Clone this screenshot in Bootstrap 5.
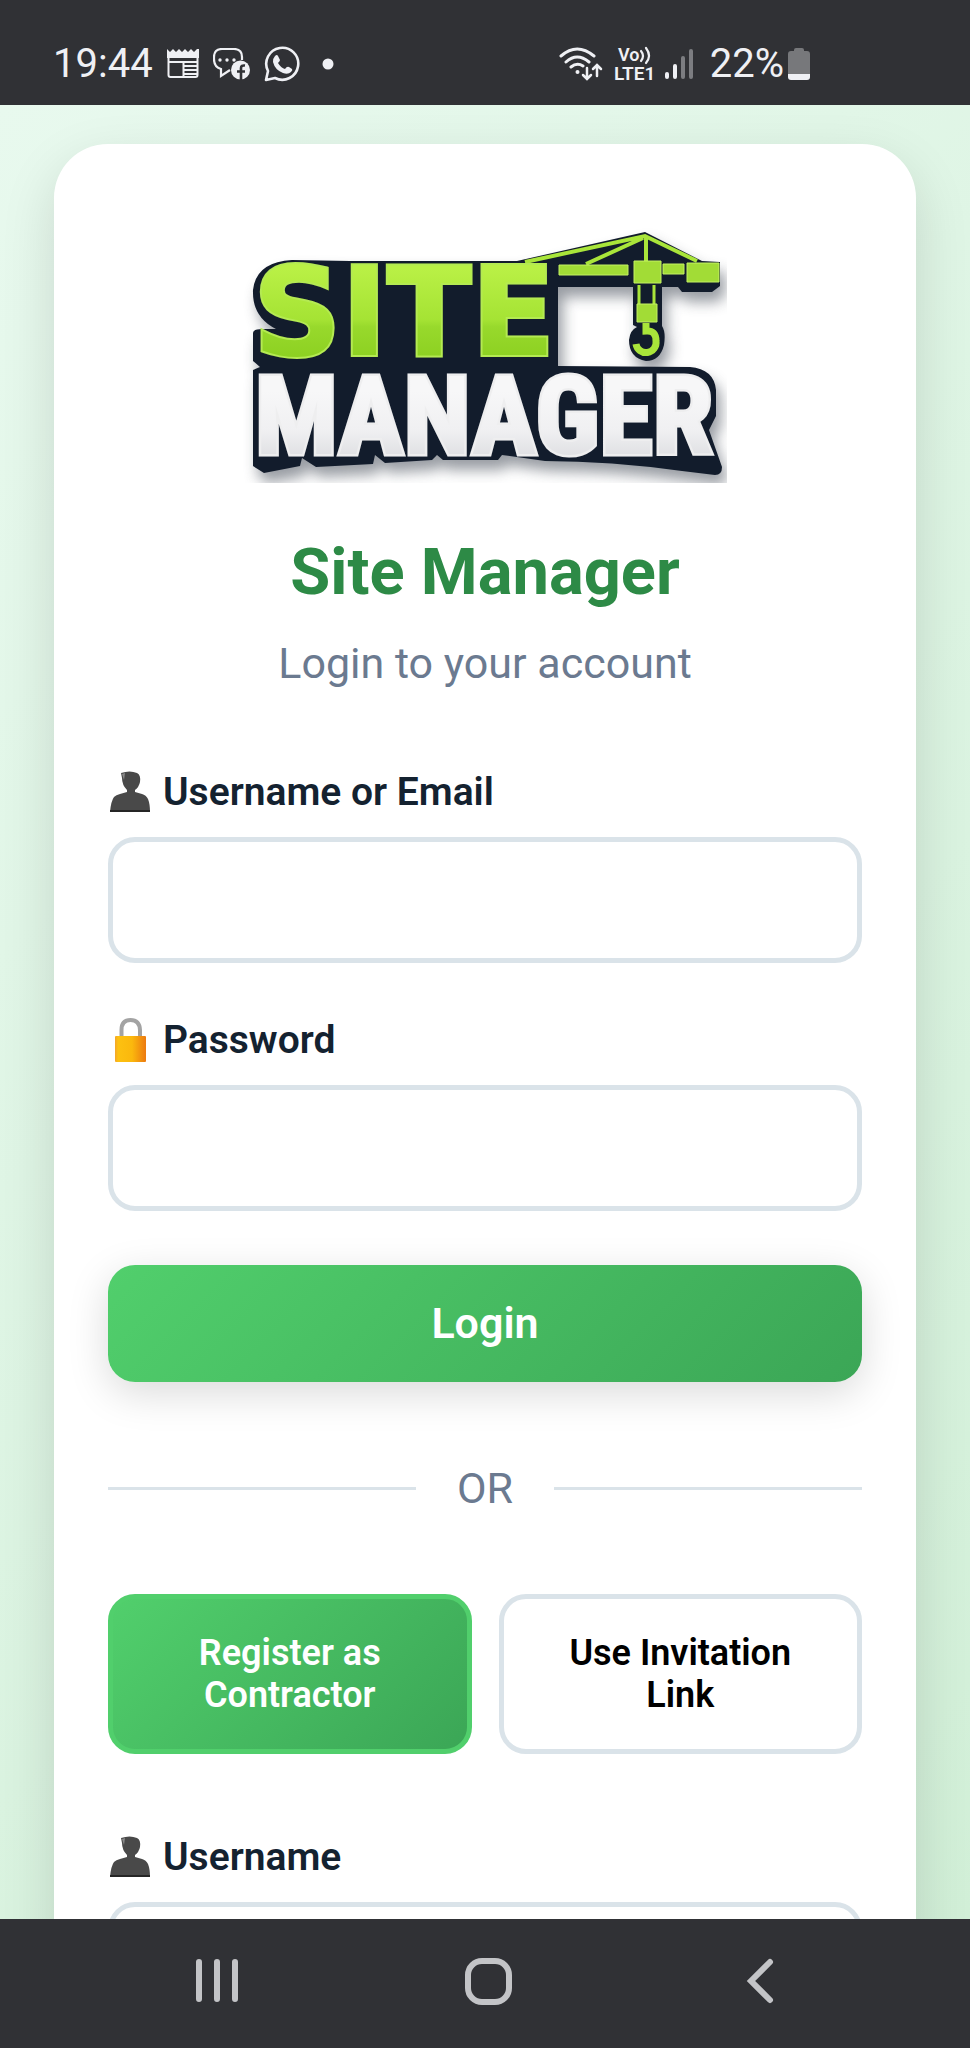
<!DOCTYPE html>
<html lang="en">
<head>
<meta charset="utf-8">
<meta name="viewport" content="width=device-width, initial-scale=1">
<title>Site Manager – Login</title>
<link href="https://cdn.jsdelivr.net/npm/bootstrap@5.3.0/dist/css/bootstrap.min.css" rel="stylesheet">
<style>
  body { font-family: Roboto, sans-serif; background: #e3f6e8; }
  .system-bar { background: #303135; color: #eff0f4; }
  .status-bar { height: 105px; padding: 22px 160px 0 53px; font-size: 40px; line-height: 48px; }
  .status-bar svg, .system-nav svg { display: block; flex: none; }
  .notices { gap: 14px; }
  .system-nav { height: 129px; padding: 0 75px 6px 81px; }
  .system-nav button { background: none; border: 0; color: #c3c4c7; height: 108px; }
  .page-area { min-height: 0; padding: 39px 54px 0; background: linear-gradient(135deg, #e8f9ee, #d1efd7); }
  .login-card { border: 0; border-radius: 54px; padding: 82px 54px 54px; box-shadow: 0 20px 54px rgba(0,0,0,.13); }
  .logo { display: block; width: 484px; max-width: 100%; margin: 0 auto 50px; }
  .login-card h1 { font-size: 65px; line-height: 78px; font-weight: 700; color: #2d8a46; margin-bottom: 22px; }
  .subtitle, .divider { font-size: 43px; line-height: 60px; color: #6b7a90; }
  .subtitle { margin-bottom: 76px; }
  .field { margin-bottom: 54px; }
  .field label { display: flex; align-items: center; gap: 10px; font-size: 39px; line-height: 46px; font-weight: 600; color: #142230; margin-bottom: 22px; }
  .field .form-control { height: 126px; border: 5px solid #dae3e9; border-radius: 27px; font-size: 43px; padding: 0 38px; }
  .btn-login, .btn-tab { border-radius: 27px; font-weight: 600; }
  .green-fill, .green-fill:hover { background: linear-gradient(135deg, #51cf6c, #3ba656); color: #fff; }
  .btn-login { height: 117px; border: 0; font-size: 43px; box-shadow: 0 11px 40px rgba(0,0,0,.15); }
  .divider { gap: 41px; margin: 76px 0; }
  .divider span { flex: 1; height: 3px; background: #dae3e9; }
  .tab-row { gap: 27px; margin-bottom: 80px; }
  .btn-tab { flex: 1 1 0; height: 160px; border: 5px solid #dae3e9; padding: 0 54px; font-size: 36px; line-height: 42px; color: #000; }
  .btn-tab.green-fill { border-color: #51cf6c; color: #fff; }
</style>
</head>
<body class="d-flex flex-column vh-100 overflow-hidden">

<header class="system-bar status-bar d-flex align-items-center justify-content-between flex-shrink-0">
  <div class="notices d-flex align-items-center">
    <span>19:44</span>
    <svg width="32" height="30" viewBox="0 0 32 30" fill="none" stroke="currentColor" aria-hidden="true">
      <path d="M0 0l3 3 3-3 3 3 3-3 3 3 3-3 3 3 3-3 3 3 3-3 2 0V9H0Z" fill="currentColor" stroke="none"/>
      <path d="M1.500 8V26q0 2 2 2H28.500q2 0 2-2V8M1.500 13H30.500M16.500 13V28M17 17H30M17 21H30M17 25H30" stroke-width="2"/>
    </svg>
    <svg width="37" height="32" viewBox="0 0 37 32" aria-hidden="true">
      <path d="M17 22l-9 6v-7q-7-2-7-10V9q0-8 8-8H21q8 0 8 8v3" fill="none" stroke="currentColor" stroke-width="2.200"/>
      <g fill="currentColor"><circle cx="7" cy="12" r="1.700"/><circle cx="14" cy="12" r="1.700"/><circle cx="21" cy="12" r="1.700"/><circle cx="27.500" cy="22" r="9.500"/></g>
      <path d="M28 32V20q0-3 4-2.500M24 23.500h8" fill="none" stroke="#303135" stroke-width="2.600"/>
    </svg>
    <svg width="36" height="36" viewBox="0 0 36 36" aria-hidden="true">
      <path d="M2 34l2-9A16 16 0 1 1 11 32Z" fill="none" stroke="currentColor" stroke-width="2.600" stroke-linejoin="round"/>
      <path d="M11 10q2-2 3 0l2 4q0 1-2 3 3 5 7 6 2-3 4-2l3 2q1 1-1 3-3 3-8 1-8-3-10-11 0-4 2-6Z" fill="currentColor"/>
    </svg>
    <svg class="ms-2" width="12" height="12" viewBox="0 0 12 12" aria-hidden="true"><circle cx="6" cy="6" r="5.500" fill="currentColor"/></svg>
  </div>
  <div class="d-flex align-items-center">
    <svg width="44" height="34" viewBox="0 0 44 34" fill="none" stroke="currentColor" stroke-width="3" stroke-linecap="round" aria-hidden="true">
      <path d="M2 9Q18-5 35 9M7 15Q18 5 30 15M12 20Q18 15 24 19"/><circle cx="18.500" cy="25" r="2" fill="currentColor" stroke="none"/>
      <path d="M28 21V31M24 28l4 4 4-4M38 29V19M34 22l4-4 4 4" stroke-width="2.500"/>
    </svg>
    <svg class="ms-2" width="49" height="48" viewBox="0 0 49 48" aria-hidden="true">
      <g fill="currentColor" font-family="Roboto, sans-serif" font-weight="600"><text x="7" y="21" font-size="18">Vo</text><text x="3" y="40" font-size="19">LTE1</text></g>
      <path d="M30 11q4 5 0 10M35 8q6 8 0 15" fill="none" stroke="currentColor" stroke-width="2.200" stroke-linecap="round"/>
    </svg>
    <svg class="ms-1" width="30" height="32" viewBox="0 0 30 32" stroke="currentColor" stroke-width="4" stroke-linecap="round" aria-hidden="true">
      <path d="M3 26v3M11 18v11"/><path d="M19 10v19M27 3v26" opacity=".4"/>
    </svg>
    <span class="ms-3">22%</span>
    <svg class="ms-1" width="22" height="34" viewBox="0 0 22 34" aria-hidden="true">
      <path d="M6 4V3q0-2 2-2h6q2 0 2 2v1h3q3 0 3 3V27H0V7q0-3 3-3Z" fill="#77787b"/><path d="M0 27H22v3q0 3-3 3H3q-3 0-3-3Z" fill="currentColor"/>
    </svg>
  </div>
</header>

<main class="page-area flex-grow-1 overflow-hidden">
  <div class="card login-card">
    <svg class="logo" viewBox="243 226 484 257" role="img" aria-label="Site Manager logo">
      <defs>
        <linearGradient id="lime" x1="0" y1="0" x2="0" y2="1"><stop offset=".2" stop-color="#b9f045"/><stop offset=".55" stop-color="#a5e334"/><stop offset=".6" stop-color="#98d92c"/><stop offset=".85" stop-color="#8bcf20"/></linearGradient>
        <linearGradient id="steel" x1="0" y1="0" x2="0" y2="1"><stop offset=".3" stop-color="#f7f7f8"/><stop offset=".6" stop-color="#f0f0f2"/><stop offset=".85" stop-color="#dcdde0"/></linearGradient>
        <filter id="soft" x="-10%" y="-10%" width="120%" height="125%"><feGaussianBlur stdDeviation="7"/></filter>
        <path id="plate" d="M253 333 Q253 329 262 329 L276 329 Q252 317 253 290 Q256 262 292 260 L350 261 L517 261 L645 232 L702 261 L720 262 V286 L712 292 H682 L678 287 H662 V326 Q666 332 664 345 Q660 361 646 361 Q629 358 629 340 Q630 330 637 327 L633 325 V287 H558 V366 L690 367 Q714 369 716 390 V416 L709 430 L722 467 Q722 475 715 475 L682 471 Q610 461 545 461 L502 455 L498 460 H443 L437 455 L432 460 L385 463 L375 455 L373 464 L316 467 L302 458 L300 466 L264 473 L253 466 V370 L260 367 L253 361 Z"/>
      </defs>
      <use href="#plate" x="5" y="10" fill="#555b66" opacity=".6" filter="url(#soft)"/>
      <use href="#plate" fill="#121c2c"/>
      <g fill="none" stroke="#a9e53a" stroke-width="4">
        <path d="M525 262L645 236L697 261M586 264L643 238"/><path d="M646 236V262"/>
        <path d="M639 285V306M654 285V306" stroke-width="3"/>
        <path d="M646 323V331Q656 330 656 341A10 10 0 0 1 636 344" stroke-width="7"/>
      </g>
      <g fill="#a2dc36" stroke="#c3f163" stroke-width="1">
        <path d="M559 265H628V275H559ZM663 264H684V274H663ZM634 261H661V283H634ZM687 263H719V282H687ZM637 304H657V322H637Z"/>
      </g>
      <text x="253" y="355" font-family="'DejaVu Sans', sans-serif" font-weight="700" font-size="123" fill="url(#lime)" stroke="#b4ea52" stroke-width="4" paint-order="stroke">SITE</text>
      <text x="255" y="454" font-family="'Roboto Condensed', 'Liberation Sans Narrow', 'Open Sans Condensed', 'DejaVu Sans Condensed', sans-serif" font-weight="700" font-size="109" fill="url(#steel)" stroke="#eeeeef" stroke-width="5" paint-order="stroke">MANAGER</text>
    </svg>

    <h1 class="text-center">Site Manager</h1>
    <p class="subtitle text-center">Login to your account</p>

    <svg class="d-none" aria-hidden="true">
      <symbol id="person" viewBox="0 0 45 46">
        <path d="M2 43Q3 32 6 28Q8 26 12 25L19 23V21Q14 16 14 9L13 4Q22 1 29 4Q33 6 32 13Q31 18 27 21V23L34 25Q38 26 40 30Q42 35 42 43Z" fill="#494949"/>
        <path d="M2 41H42V43H2Z" fill="#252525"/><path d="M14 5l3-1-1 7Z" fill="#8a8a8a"/>
      </symbol>
    </svg>
    <form onsubmit="return false">
      <div class="field">
        <label for="login-user"><svg width="45" height="46" aria-hidden="true"><use href="#person"/></svg>Username or Email</label>
        <input class="form-control" id="login-user" type="text">
      </div>
      <div class="field">
        <label for="login-pass">
          <svg width="45" height="46" viewBox="0 0 45 46" aria-hidden="true">
            <defs><linearGradient id="gold"><stop offset="0" stop-color="#f3a52a"/><stop offset=".1" stop-color="#fdc111"/><stop offset=".55" stop-color="#fbb80d"/><stop offset="1" stop-color="#ec7a10"/></linearGradient></defs>
            <path d="M13.500 21V13Q13.500 3 22.500 3T32 13V21" fill="none" stroke="#a3a3a3" stroke-width="4"/>
            <rect x="7" y="19" width="31" height="26" rx="1" fill="url(#gold)"/>
          </svg>Password</label>
        <input class="form-control" id="login-pass" type="password">
      </div>
      <button class="btn btn-login green-fill w-100" type="submit">Login</button>
    </form>

    <div class="divider d-flex align-items-center"><span></span>OR<span></span></div>

    <div class="tab-row d-flex">
      <button class="btn btn-tab green-fill" type="button">Register as Contractor</button>
      <button class="btn btn-tab bg-white" type="button">Use Invitation Link</button>
    </div>

    <div class="field">
      <label for="reg-user"><svg width="45" height="46" aria-hidden="true"><use href="#person"/></svg>Username</label>
      <input class="form-control" id="reg-user" type="text">
    </div>
  </div>
</main>

<nav class="system-bar system-nav d-flex align-items-center flex-shrink-0" aria-label="System navigation">
  <button class="flex-fill d-flex align-items-center justify-content-center" type="button" aria-label="Recent apps">
    <svg width="48" height="48" viewBox="0 0 48 48" stroke="currentColor" stroke-width="6" stroke-linecap="round"><path d="M6 5V42M24 5V42M42 5V42"/></svg>
  </button>
  <button class="flex-fill d-flex align-items-center justify-content-center" type="button" aria-label="Home">
    <svg width="48" height="48" viewBox="0 0 48 48" fill="none" stroke="currentColor" stroke-width="6"><rect x="4" y="4" width="41" height="41" rx="14"/></svg>
  </button>
  <button class="flex-fill d-flex align-items-center justify-content-center" type="button" aria-label="Back">
    <svg width="48" height="48" viewBox="0 0 48 48" fill="none" stroke="currentColor" stroke-width="6" stroke-linecap="round"><path d="M35 5L16 24L35 43"/></svg>
  </button>
</nav>

<script src="https://cdn.jsdelivr.net/npm/bootstrap@5.3.0/dist/js/bootstrap.bundle.min.js"></script>
</body>
</html>
